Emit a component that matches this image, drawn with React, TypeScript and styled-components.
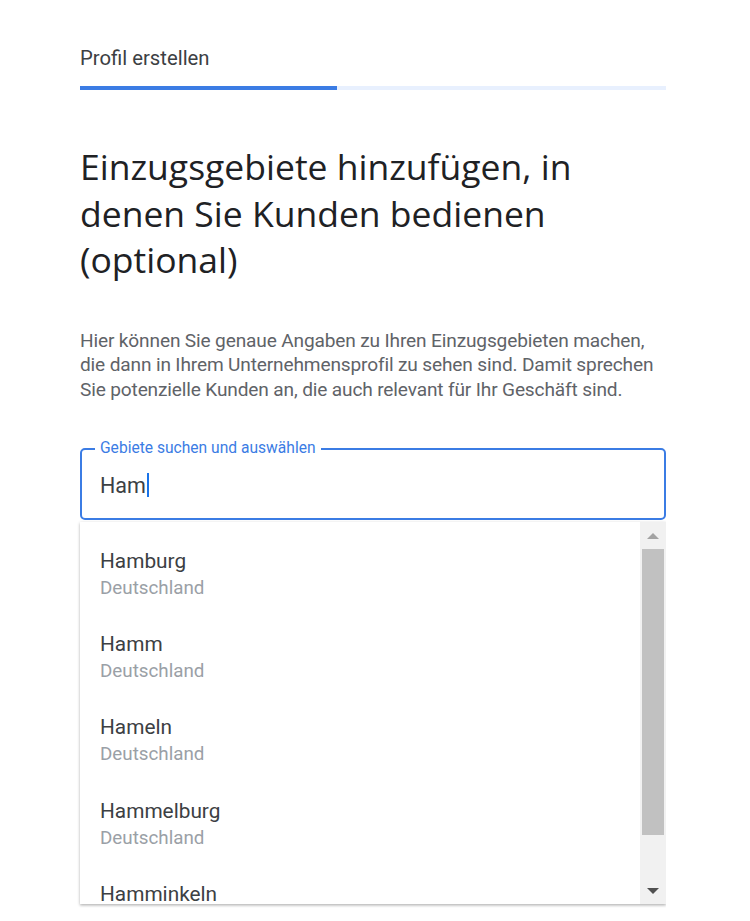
import React from "react"
import styled, { createGlobalStyle } from "styled-components"

const GlobalStyle = createGlobalStyle`
  body {
    margin: 0;
    background: #fff;
    font-family: Roboto, "Liberation Sans", Arial, sans-serif;
  }
`

const places = [
  { name: "Hamburg", country: "Deutschland" },
  { name: "Hamm", country: "Deutschland" },
  { name: "Hameln", country: "Deutschland" },
  { name: "Hammelburg", country: "Deutschland" },
  { name: "Hamminkeln", country: "Deutschland" },
]

function App() {
  return (
    <>
      <GlobalStyle />
      <Page>
        <StepTitle>Profil erstellen</StepTitle>
        <Progress>
          <ProgressFill style={{ width: `${(257 / 586) * 100}%` }} />
        </Progress>
        <Heading>Einzugsgebiete hinzufügen, in denen Sie Kunden bedienen (optional)</Heading>
        <Intro>
          Hier können Sie genaue Angaben zu Ihren Einzugsgebieten machen,
          <br />
          die dann in Ihrem Unternehmensprofil zu sehen sind. Damit sprechen
          <br />
          Sie potenzielle Kunden an, die auch relevant für Ihr Geschäft sind.
        </Intro>
        <Field>
          <FieldLabel>Gebiete suchen und auswählen</FieldLabel>
          <FieldValue>
            Ham
            <Caret />
          </FieldValue>
        </Field>
        <Dropdown>
          <List>
            {places.map((p) => (
              <Item key={p.name}>
                <ItemName>{p.name}</ItemName>
                <ItemCountry>{p.country}</ItemCountry>
              </Item>
            ))}
          </List>
          <Scrollbar>
            <ScrollButton>
              <Arrow $up />
            </ScrollButton>
            <Thumb />
            <Track />
            <ScrollButton>
              <Arrow />
            </ScrollButton>
          </Scrollbar>
        </Dropdown>
      </Page>
    </>
  )
}

export default App

const Page = styled.div`
  width: 586px;
  padding: 46px 0 0 80px;
  height: 875px;
  overflow: hidden;
`
const StepTitle = styled.div`
  font-size: 20.3px;
  line-height: 24px;
  color: #3c4043;
`
const Progress = styled.div`
  margin-top: 16px;
  height: 4px;
  background: #e8f0fe;
  display: flex;
`
const ProgressFill = styled.div`
  height: 100%;
  background: #3b7ce4;
`
const Heading = styled.h1`
  margin: 53px 0 0;
  font-family: "Open Sans", Roboto, sans-serif;
  font-size: 35.5px;
  font-weight: 400;
  line-height: 46.5px;
  color: #202124;
`
const Intro = styled.p`
  margin: 46px 0 0;
  font-size: 19.1px;
  line-height: 24.5px;
  letter-spacing: -0.15px;
  white-space: nowrap;
  color: #5f6368;
`
const Field = styled.div`
  position: relative;
  margin-top: 46px;
  height: 72px;
  box-sizing: border-box;
  border: 2px solid #3b7ce4;
  border-radius: 5px;
  display: flex;
  align-items: center;
  padding: 0 18px;
`
const FieldLabel = styled.span`
  position: absolute;
  top: -11px;
  left: 13px;
  padding: 0 5px;
  background: #fff;
  font-size: 15.6px;
  line-height: 18px;
  color: #3b7ce4;
`
const FieldValue = styled.div`
  display: flex;
  align-items: center;
  font-size: 21.5px;
  color: #3c4043;
  margin-top: 2px;
`
const Caret = styled.span`
  display: inline-block;
  width: 2px;
  height: 24px;
  margin-left: 1px;
  background: #1a73e8;
`
const Dropdown = styled.div`
  margin-top: 2px;
  height: 382px;
  display: flex;
  background: #fff;
  box-shadow: 0 1px 3px rgba(0, 0, 0, 0.25), 0 2px 2px rgba(0, 0, 0, 0.08);
  overflow: hidden;
`
const List = styled.div`
  flex: 1;
  padding-top: 11px;
  overflow: hidden;
`
const Item = styled.div`
  padding: 14.7px 20px;
`
const ItemName = styled.div`
  font-size: 20.8px;
  line-height: 27px;
  color: #3c4043;
`
const ItemCountry = styled.div`
  font-size: 18.8px;
  line-height: 27px;
  color: #9aa0a6;
`
const Scrollbar = styled.div`
  width: 26px;
  display: flex;
  flex-direction: column;
  background: #f1f1f1;
  padding: 0 2px;
  box-sizing: border-box;
`
const ScrollButton = styled.div`
  height: 27px;
  display: flex;
  align-items: center;
  justify-content: center;
`
const Arrow = styled.span<{ $up?: boolean }>`
  width: 0;
  height: 0;
  border-left: 6px solid transparent;
  border-right: 6px solid transparent;
  ${(p) =>
    p.$up ? "border-bottom: 6px solid #a3a3a3;" : "border-top: 6px solid #505050;"}
`
const Thumb = styled.div`
  height: 286px;
  background: #c1c1c1;
`
const Track = styled.div`
  flex: 1;
`
